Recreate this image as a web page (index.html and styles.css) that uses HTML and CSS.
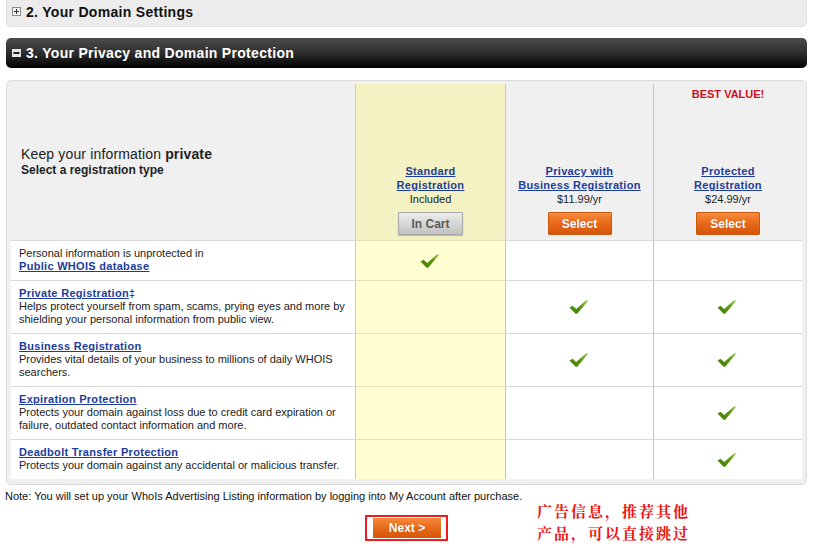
FILE: index.html
```html
<!DOCTYPE html>
<html>
<head>
    <title>Your Privacy and Domain Protection</title>
    <link rel="stylesheet" href="styles.css">
</head>
<body>
    <div class="page">
        <div class="section section-closed">
            <svg class="toggle" width="9" height="9" viewBox="0 0 9 9"><rect x="0.5" y="0.5" width="8" height="8" fill="#f4f4f4" stroke="#8a8a8a"/><path d="M2 4.5h5M4.5 2v5" stroke="#333" stroke-width="1"/></svg>
            2. Your Domain Settings
        </div>

        <div class="section section-open">
            <svg class="toggle" width="9" height="8" viewBox="0 0 9 8"><rect x="0" y="0" width="9" height="8" fill="#e6e6e6"/><rect x="1.5" y="3" width="6" height="2" fill="#222"/></svg>
            3. Your Privacy and Domain Protection
        </div>

        <div class="panel">
            <div class="compare">
                <div class="intro">
                    <div class="intro-title">Keep your information <b>private</b></div>
                    <div class="intro-sub">Select a registration type</div>
                </div>
                <div class="plan std">
                    <a href="#">Standard<br>Registration</a>
                    <div class="price">Included</div>
                    <button class="btn btn-gray">In Cart</button>
                </div>
                <div class="plan">
                    <a href="#">Privacy with<br>Business Registration</a>
                    <div class="price">$11.99/yr</div>
                    <button class="btn btn-orange">Select</button>
                </div>
                <div class="plan">
                    <div class="badge">BEST VALUE!</div>
                    <a href="#">Protected<br>Registration</a>
                    <div class="price">$24.99/yr</div>
                    <button class="btn btn-orange">Select</button>
                </div>

                <div class="feature">Personal information is unprotected in<br><a href="#">Public WHOIS database</a></div>
                <div class="mark std"><svg class="tick"><use href="#tick"/></svg></div>
                <div class="mark"></div>
                <div class="mark"></div>

                <div class="feature"><a href="#">Private Registration</a>&Dagger;<br>Helps protect yourself from spam, scams, prying eyes and more by shielding your personal information from public view.</div>
                <div class="mark std"></div>
                <div class="mark"><svg class="tick"><use href="#tick"/></svg></div>
                <div class="mark"><svg class="tick"><use href="#tick"/></svg></div>

                <div class="feature"><a href="#">Business Registration</a><br>Provides vital details of your business to millions of daily WHOIS searchers.</div>
                <div class="mark std"></div>
                <div class="mark"><svg class="tick"><use href="#tick"/></svg></div>
                <div class="mark"><svg class="tick"><use href="#tick"/></svg></div>

                <div class="feature"><a href="#">Expiration Protection</a><br>Protects your domain against loss due to credit card expiration or failure, outdated contact information and more.</div>
                <div class="mark std"></div>
                <div class="mark"></div>
                <div class="mark"><svg class="tick"><use href="#tick"/></svg></div>

                <div class="feature"><a href="#">Deadbolt Transfer Protection</a><br>Protects your domain against any accidental or malicious transfer.</div>
                <div class="mark std"></div>
                <div class="mark"></div>
                <div class="mark"><svg class="tick"><use href="#tick"/></svg></div>
            </div>
        </div>

        <p class="note">Note: You will set up your WhoIs Advertising Listing information by logging into My Account after purchase.</p>

        <div class="next-row">
            <div class="next-frame"><button class="btn btn-orange btn-next">Next &gt;</button></div>
            <div class="annotation">广告信息，推荐其他<br>产品，可以直接跳过</div>
        </div>
    </div>

    <svg width="0" height="0" class="defs">
        <defs>
            <linearGradient id="tickFill" x1="0" y1="1" x2="1" y2="0">
                <stop offset="0" stop-color="#3f7a06"/>
                <stop offset="0.6" stop-color="#5e9a12"/>
                <stop offset="1" stop-color="#a9d46a"/>
            </linearGradient>
            <symbol id="tick" viewBox="0 0 20 16">
                <path d="M0.5 8.6 L3.6 6.8 L7.2 10 L16.8 1.6 L19.6 1.2 L8.2 14.8 L6.6 14.8 Z" fill="url(#tickFill)"/>
            </symbol>
        </defs>
    </svg>
</body>
</html>
```

FILE: styles.css
```css
body {
    margin: 0;
    padding: 0;
    background: #ffffff;
    font-family: "Liberation Sans", Arial, sans-serif;
    color: #222;
}

.page {
    padding: 0 7px 0 6px;
}

.section {
    display: flex;
    align-items: center;
    gap: 5px;
    padding-left: 5px;
    font-size: 14px;
    font-weight: bold;
    letter-spacing: 0.3px;
    box-sizing: border-box;
}

.section-closed {
    height: 27px;
    background: #ececec;
    border: 1px solid #e0e0e0;
    border-top: none;
    border-radius: 0 0 5px 5px;
    color: #111;
    padding-bottom: 3px;
}

.section-open {
    height: 30px;
    margin-top: 11px;
    background: linear-gradient(#4c4c4c, #2a2a2a 55%, #000000);
    border-radius: 5px;
    color: #ffffff;
    padding-left: 6px;
}

.toggle {
    flex: none;
}

.panel {
    margin-top: 12px;
    background: #f0f0f0;
    border: 1px solid #dcdcdc;
    border-radius: 5px;
    padding: 3px 4px 5px 4px;
}

.compare {
    display: grid;
    grid-template-columns: 344px 150px 148px 149px;
    font-size: 11px;
    line-height: 13px;
}

.compare a {
    color: #1c3d9b;
    font-weight: bold;
    letter-spacing: 0.3px;
}

.intro {
    min-height: 156px;
    display: flex;
    flex-direction: column;
    justify-content: center;
    padding-left: 10px;
    box-sizing: border-box;
}

.intro-title {
    font-size: 14px;
    line-height: 16px;
    letter-spacing: 0.15px;
}

.intro-sub {
    font-size: 12px;
    line-height: 16px;
    font-weight: bold;
}

.plan {
    display: flex;
    flex-direction: column;
    justify-content: flex-end;
    align-items: center;
    text-align: center;
    border-left: 1px solid #c4c4c4;
    padding-bottom: 5px;
    line-height: 14px;
}

.plan.std {
    background: #f4f2c2;
    border-left-color: #cfcca6;
}

.badge {
    margin-bottom: auto;
    padding-top: 3px;
    color: #cc1122;
    font-weight: bold;
}

.price {
    margin-bottom: 6px;
}

.btn {
    font-family: "Liberation Sans", Arial, sans-serif;
    font-size: 12px;
    font-weight: bold;
    height: 23px;
    padding: 0;
    border-radius: 1px;
    cursor: pointer;
}

.btn-gray {
    width: 65px;
    color: #5a5a5a;
    background: linear-gradient(#ececec, #c2c2c2);
    border: 1px solid #a8a8a8;
    box-shadow: 0 1px 1px rgba(0, 0, 0, 0.25);
}

.btn-orange {
    width: 64px;
    color: #ffffff;
    background: linear-gradient(#f68a3c, #e8691a 50%, #d5560a);
    border: 1px solid #c9590f;
    text-shadow: 0 0 1px rgba(120, 40, 0, 0.4);
}

.feature {
    background: #ffffff;
    border-top: 1px solid #dadada;
    padding: 6px 8px 7px 8px;
}

.mark {
    display: flex;
    justify-content: center;
    align-items: center;
    background: #ffffff;
    border-top: 1px solid #dadada;
    border-left: 1px solid #c4c4c4;
}

.mark.std {
    background: #ffffd2;
    border-top-color: #e2e0b4;
    border-left-color: #cfcca6;
}

.tick {
    width: 20px;
    height: 16px;
    margin-left: -2px;
}

.note {
    margin: 5px 0 0 -1px;
    font-size: 11px;
    line-height: 13px;
    color: #111;
}

.next-row {
    display: grid;
    grid-template-columns: 1fr auto 1fr;
    align-items: start;
}

.next-frame {
    grid-column: 2;
    margin-top: 12px;
    padding: 1px 5px 1px 6px;
    border: 2px solid #ee1c1c;
    background: #ffffff;
}

.btn-next {
    display: block;
    width: 68px;
    height: 20px;
    border: none;
    border-radius: 0;
}

.annotation {
    margin: -3px 0 0 89px;
    font-family: "Noto Serif CJK SC", "Noto Sans CJK SC", serif;
    font-size: 15px;
    font-weight: bold;
    letter-spacing: 2px;
    line-height: 22px;
    color: #ee1111;
}

.defs {
    position: absolute;
}
```
